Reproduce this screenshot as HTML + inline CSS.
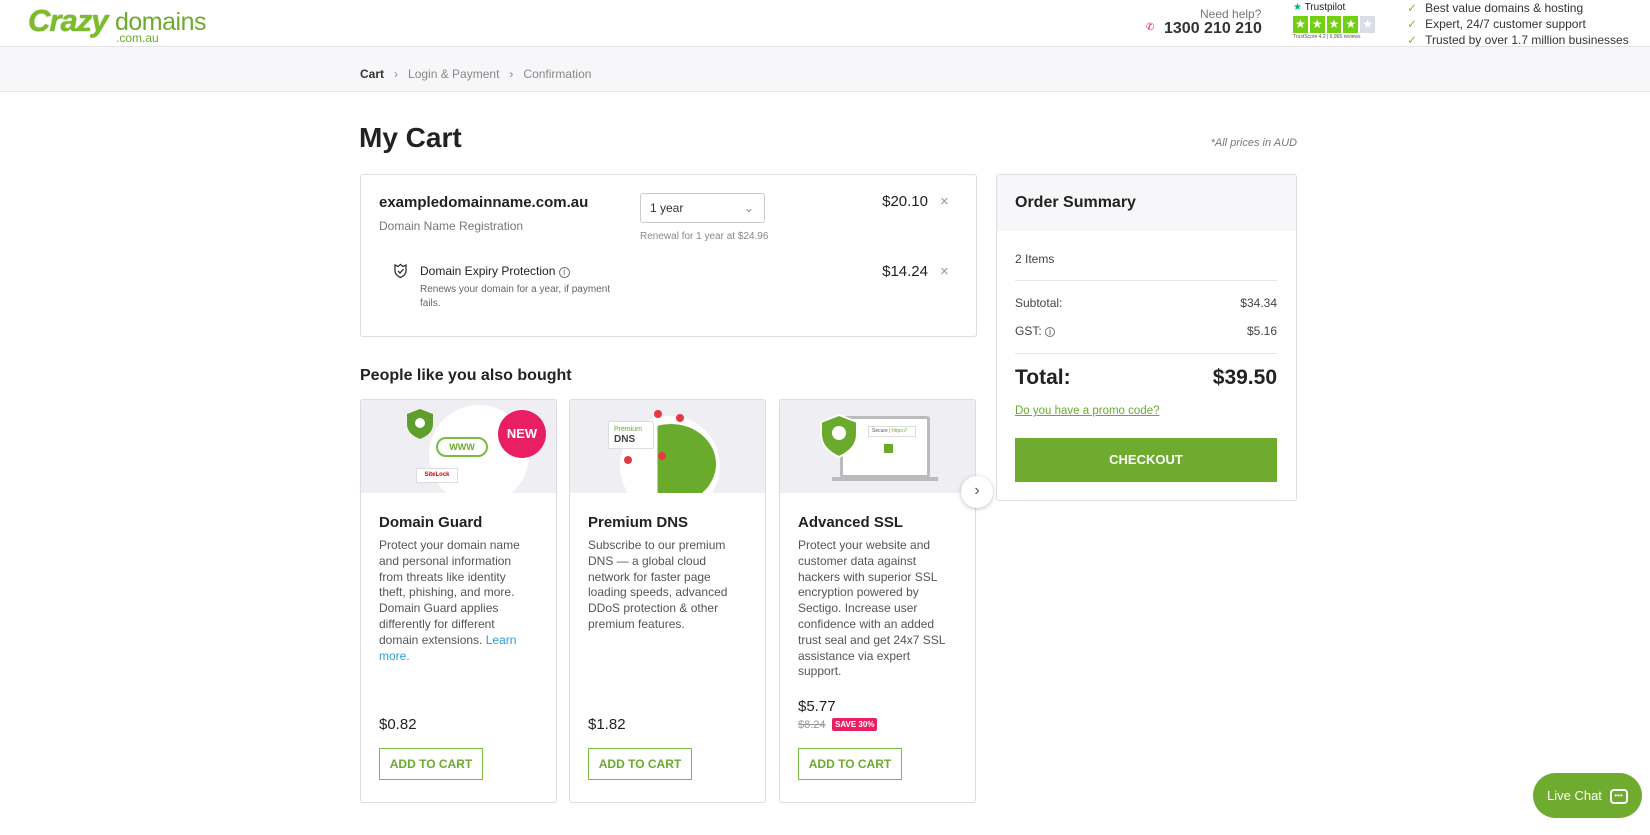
<!DOCTYPE html>
<html><head><meta charset="utf-8"><style>
*{box-sizing:border-box;margin:0;padding:0}
body{width:1650px;height:835px;overflow:hidden;background:#fff;font-family:"Liberation Sans",Arial,sans-serif;color:#222;position:relative}
.a{position:absolute;white-space:nowrap}
.hdr{position:absolute;left:0;top:0;width:1650px;height:47px;border-bottom:1px solid #e2e2e2;background:#fff}
.bc{position:absolute;left:0;top:47px;width:1650px;height:45px;background:#f7f7f9;border-bottom:1px solid #e6e6e6}
.box{position:absolute;border:1px solid #dcdde0;border-radius:3px;background:#fff}
.card{position:absolute;top:399px;width:197px;height:404px;border:1px solid #dcdde0;border-radius:3px;background:#fff;overflow:hidden}
.card .img{height:93px;background:#efeff3;position:relative;overflow:hidden}
.card h3{position:absolute;left:18px;top:114px;font-size:15px;font-weight:bold;color:#222}
.card p{position:absolute;left:18px;top:138px;width:148px;font-size:12px;line-height:15.8px;color:#555;white-space:normal}
.btn{position:absolute;left:18px;top:348px;width:104px;height:32px;border:1.5px solid #7cbb43;color:#6aab2e;font-size:12px;font-weight:bold;display:flex;align-items:center;justify-content:center}
.price{position:absolute;left:18px;font-size:15px;color:#222}
</style></head><body>
<div class="hdr"></div>
<div class="a" style="left:28px;top:3px;font-size:31px;font-weight:bold;font-style:italic;color:#7cbb2a;letter-spacing:-1px;text-shadow:0 0 1px #4f8a16">Crazy</div>
<div class="a" style="left:115px;top:8px;font-size:25px;color:#6aab2e;letter-spacing:-0.5px">domains</div>
<div class="a" style="left:116px;top:31px;font-size:12px;color:#6aab2e">.com.au</div>

<div class="a" style="left:1200px;top:7px;font-size:12px;color:#777">Need help?</div>
<div class="a" style="left:1146px;top:22px;font-size:10px;color:#e0245e">✆</div>
<div class="a" style="left:1164px;top:20px;font-size:16px;font-weight:bold;color:#333">1300 210 210</div>
<div class="a" style="left:1293px;top:2px;font-size:10px;color:#222"><span style="color:#00b67a">★</span> Trustpilot</div>
<div class="a" style="left:1293px;top:16px;width:82px;height:17px;display:flex;gap:2px">
<span style="flex:1;background:#73cf11;color:#fff;font-size:12px;text-align:center;line-height:17px">★</span><span style="flex:1;background:#73cf11;color:#fff;font-size:12px;text-align:center;line-height:17px">★</span><span style="flex:1;background:#73cf11;color:#fff;font-size:12px;text-align:center;line-height:17px">★</span><span style="flex:1;background:#73cf11;color:#fff;font-size:12px;text-align:center;line-height:17px">★</span><span style="flex:1;background:#dcdce6;color:#fff;font-size:12px;text-align:center;line-height:17px">★</span></div>
<div class="a" style="left:1293px;top:34px;font-size:5px;color:#555">TrustScore 4.2 | 6,965 reviews</div>
<div class="a" style="left:1407px;top:0px;font-size:12px;line-height:16px;color:#333">
<div><span style="color:#7cbb43;margin-right:8px">✓</span>Best value domains &amp; hosting</div>
<div><span style="color:#7cbb43;margin-right:8px">✓</span>Expert, 24/7 customer support</div>
<div><span style="color:#7cbb43;margin-right:8px">✓</span>Trusted by over 1.7 million businesses</div></div>

<div class="bc"></div>
<div class="a" style="left:360px;top:67px;font-size:12px;color:#888"><b style="color:#333">Cart</b> &nbsp;&nbsp;›&nbsp;&nbsp; Login &amp; Payment &nbsp;&nbsp;›&nbsp;&nbsp; Confirmation</div>

<div class="a" style="left:359px;top:122px;font-size:28px;font-weight:bold;color:#222">My Cart</div>
<div class="a" style="left:1200px;top:137px;width:97px;text-align:right;font-size:11px;font-style:italic;color:#777">*All prices in AUD</div>

<div class="box" style="left:360px;top:174px;width:617px;height:163px"></div>
<div class="a" style="left:379px;top:194px;font-size:15px;font-weight:bold;color:#222">exampledomainname.com.au</div>
<div class="a" style="left:379px;top:219px;font-size:12px;color:#777">Domain Name Registration</div>
<div class="a" style="left:640px;top:193px;width:125px;height:30px;border:1px solid #ccc;border-radius:3px;font-size:12px;line-height:28px;padding-left:9px;color:#333">1 year<span style="position:absolute;right:10px;top:0;color:#888">⌄</span></div>
<div class="a" style="left:640px;top:231px;font-size:10px;color:#888">Renewal for 1 year at $24.96</div>
<div class="a" style="left:860px;top:193px;width:68px;text-align:right;font-size:15px;color:#222">$20.10</div>
<div class="a" style="left:940px;top:193px;font-size:15px;color:#999">×</div>
<svg class="a" style="left:393px;top:263px" width="15" height="16" viewBox="0 0 15 16"><path d="M2 2 L5 3.5 L7.5 1.5 L10 3.5 L13 2 L13 8 Q13 12 7.5 14.5 Q2 12 2 8Z" fill="none" stroke="#333" stroke-width="1.3"/><path d="M5 8 L7 10 L10.5 6" fill="none" stroke="#333" stroke-width="1.3"/></svg>
<div class="a" style="left:420px;top:264px;font-size:12px;color:#222">Domain Expiry Protection <span style="font-size:10px;border:1px solid #777;border-radius:50%;display:inline-block;width:11px;height:11px;line-height:9px;text-align:center;color:#777">i</span></div>
<div class="a" style="left:420px;top:283px;font-size:10px;line-height:14px;color:#666">Renews your domain for a year, if payment<br>fails.</div>
<div class="a" style="left:860px;top:263px;width:68px;text-align:right;font-size:15px;color:#222">$14.24</div>
<div class="a" style="left:940px;top:263px;font-size:15px;color:#999">×</div>

<div class="a" style="left:360px;top:367px;font-size:16px;font-weight:bold;color:#222">People like you also bought</div>

<div class="card" style="left:360px">
<div class="img">
<div class="a" style="left:68px;top:5px;width:100px;height:100px;border-radius:50%;background:#fff"></div>
<svg class="a" style="left:45px;top:8px" width="28" height="32"><path d="M14 1 L27 6 L27 16 Q27 26 14 31 Q1 26 1 16 L1 6Z" fill="#5f9e2c"/><circle cx="14" cy="15" r="5" fill="#fff"/></svg>
<div class="a" style="left:75px;top:37px;width:52px;height:20px;border:2px solid #7cbb43;border-radius:10px;background:#fff;font-size:9px;font-weight:bold;color:#6aab2e;text-align:center;line-height:16px">WWW</div>
<div class="a" style="left:55px;top:68px;width:42px;height:15px;background:#fff;border:1px solid #ddd;font-size:6px;font-weight:bold;color:#c00;text-align:center;line-height:13px">SiteLock</div>
<div class="a" style="left:137px;top:10px;width:48px;height:48px;border-radius:50%;background:#e91e63;color:#fff;font-size:13px;font-weight:bold;text-align:center;line-height:48px">NEW</div>
</div>
<h3>Domain Guard</h3>
<p>Protect your domain name and personal information from threats like identity theft, phishing, and more. Domain Guard applies differently for different domain extensions. <span style="color:#2a9fd8">Learn more.</span></p>
<div class="price" style="top:316px">$0.82</div>
<div class="btn">ADD TO CART</div>
</div>

<div class="card" style="left:569px">
<div class="img">
<div class="a" style="left:50px;top:16px;width:100px;height:100px;border-radius:50%;background:#fff"></div>
<div class="a" style="left:56px;top:24px;width:90px;height:80px;border-radius:50%;background:#6aab2e;clip-path:polygon(35% 0,100% 0,100% 100%,35% 100%)"></div>
<div class="a" style="left:38px;top:21px;width:46px;height:28px;background:#fff;border:1px solid #ddd;border-radius:2px;font-size:7px;color:#6aab2e;padding:3px 5px;line-height:10px">Premium<br><b style="font-size:10px;color:#444">DNS</b></div>
<div class="a" style="left:84px;top:10px;width:8px;height:8px;border-radius:50%;background:#e53945"></div>
<div class="a" style="left:106px;top:14px;width:8px;height:8px;border-radius:50%;background:#e53945"></div>
<div class="a" style="left:54px;top:56px;width:8px;height:8px;border-radius:50%;background:#e53945"></div>
<div class="a" style="left:88px;top:52px;width:8px;height:8px;border-radius:50%;background:#e53945"></div>
</div>
<h3>Premium DNS</h3>
<p>Subscribe to our premium DNS — a global cloud network for faster page loading speeds, advanced DDoS protection &amp; other premium features.</p>
<div class="price" style="top:316px">$1.82</div>
<div class="btn">ADD TO CART</div>
</div>

<div class="card" style="left:779px">
<div class="img">
<div class="a" style="left:60px;top:16px;width:90px;height:62px;background:#fff;border:3px solid #bbb;border-radius:3px"></div>
<div class="a" style="left:52px;top:77px;width:106px;height:4px;background:#bbb"></div>
<div class="a" style="left:88px;top:26px;width:48px;height:11px;background:#fff;border:1px solid #ddd;font-size:5px;color:#555;line-height:9px;padding-left:3px">Secure | <span style="color:#6aab2e">https://</span></div>
<div class="a" style="left:104px;top:44px;width:9px;height:9px;background:#6aab2e"></div>
<svg class="a" style="left:40px;top:14px" width="38" height="44"><path d="M19 1 L37 8 L37 20 Q37 35 19 43 Q1 35 1 20 L1 8Z" fill="#6aab2e" stroke="#fff" stroke-width="2"/><circle cx="19" cy="19" r="7" fill="#fff"/></svg>
</div>
<h3>Advanced SSL</h3>
<p>Protect your website and customer data against hackers with superior SSL encryption powered by Sectigo. Increase user confidence with an added trust seal and get 24x7 SSL assistance via expert support.</p>
<div class="price" style="top:298px">$5.77</div>
<div class="a" style="left:18px;top:319px;font-size:11px;color:#999;text-decoration:line-through">$8.24</div>
<div class="a" style="left:52px;top:318px;background:#e91e63;color:#fff;font-size:8px;font-weight:bold;padding:2px 3px;border-radius:2px">SAVE 30%</div>
<div class="btn">ADD TO CART</div>
</div>

<div class="a" style="left:961px;top:476px;width:32px;height:32px;border-radius:50%;background:#fff;box-shadow:0 1px 4px rgba(0,0,0,.25);text-align:center;line-height:30px;font-size:16px;color:#555">›</div>

<div class="box" style="left:996px;top:174px;width:301px;height:327px;overflow:hidden">
<div style="height:56px;background:#f7f7f9"></div></div>
<div class="a" style="left:1015px;top:194px;font-size:16px;font-weight:bold;color:#222">Order Summary</div>
<div class="a" style="left:1015px;top:252px;font-size:12px;color:#444">2 Items</div>
<div class="a" style="left:1015px;top:280px;width:262px;height:1px;background:#e6e6e6"></div>
<div class="a" style="left:1015px;top:296px;font-size:12px;color:#444">Subtotal:</div>
<div class="a" style="left:1200px;top:296px;width:77px;text-align:right;font-size:12px;color:#444">$34.34</div>
<div class="a" style="left:1015px;top:324px;font-size:12px;color:#444">GST: <span style="font-size:9px;border:1px solid #777;border-radius:50%;display:inline-block;width:10px;height:10px;line-height:8px;text-align:center">i</span></div>
<div class="a" style="left:1200px;top:324px;width:77px;text-align:right;font-size:12px;color:#444">$5.16</div>
<div class="a" style="left:1015px;top:353px;width:262px;height:1px;background:#e6e6e6"></div>
<div class="a" style="left:1015px;top:366px;font-size:21px;font-weight:bold;color:#222">Total:</div>
<div class="a" style="left:1150px;top:366px;width:127px;text-align:right;font-size:21px;font-weight:bold;color:#222">$39.50</div>
<div class="a" style="left:1015px;top:405px;font-size:11.5px;color:#6aab2e;text-decoration:underline">Do you have a promo code?</div>
<div class="a" style="left:1015px;top:438px;width:262px;height:44px;background:#6eab2f;color:#fff;font-size:13px;font-weight:bold;text-align:center;line-height:44px">CHECKOUT</div>

<div class="a" style="left:1533px;top:773px;width:109px;height:45px;border-radius:23px;background:#6eab2f;color:#fff;font-size:13px;line-height:45px;padding-left:14px">Live Chat <span style="display:inline-block;width:18px;height:15px;border:2px solid #fff;border-radius:4px;vertical-align:middle;margin-left:4px;font-size:8px;line-height:9px;text-align:center">•••</span></div>
</body></html>
